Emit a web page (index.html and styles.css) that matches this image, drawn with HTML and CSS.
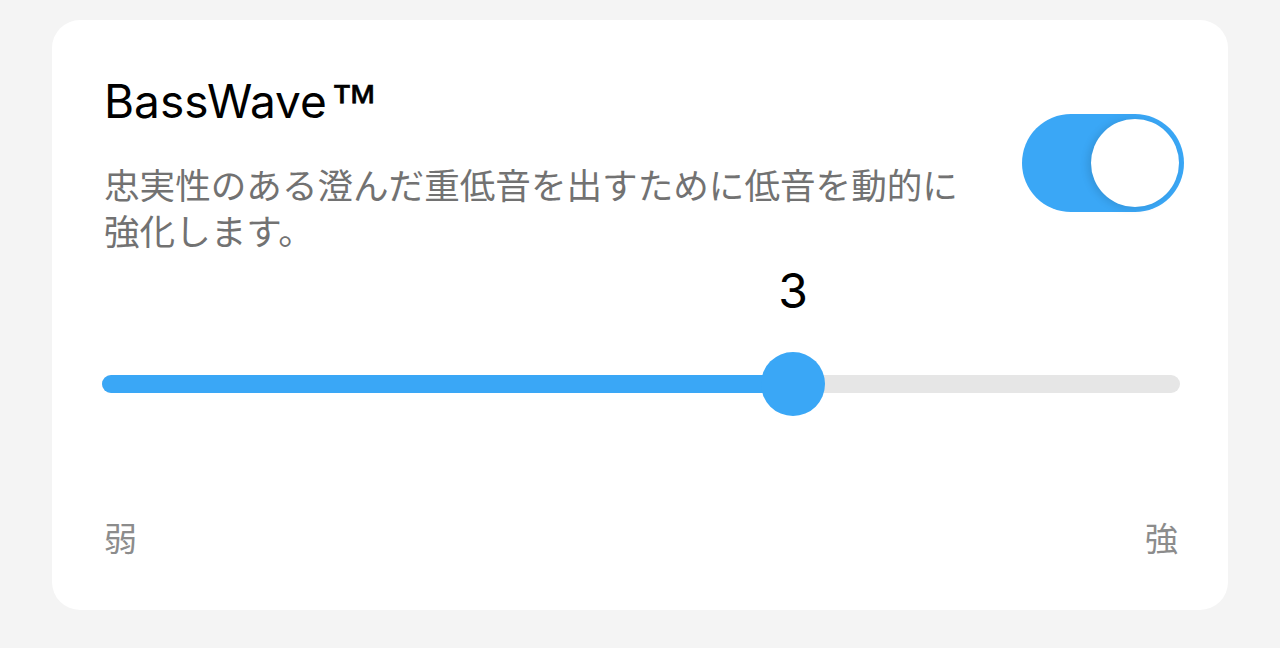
FILE: index.html
```html
<!DOCTYPE html>
<html lang="ja">
<head>
    <meta charset="UTF-8">
    <meta name="viewport" content="width=device-width, initial-scale=1.0">
    <title>BassWave</title>
    <link rel="stylesheet" href="styles.css">
</head>
<body>
    <div class="card">
        <!-- Header with toggle -->
        <div class="card-header">
            <div class="card-text">
                <h1 class="title">BassWave<span class="tm">™</span></h1>
                <p class="desc">忠実性のある澄んだ重低音を出すために低音を動的に強化します。</p>
            </div>
            <div class="toggle is-on">
                <div class="toggle-knob"></div>
            </div>
        </div>

        <!-- Level slider -->
        <div class="slider">
            <div class="slider-track">
                <div class="slider-fill" style="width: 64.1%;"></div>
                <div class="slider-value" style="left: 64.1%;">3</div>
                <div class="slider-thumb" style="left: 64.1%;"></div>
            </div>
        </div>

        <div class="slider-labels">
            <span>弱</span>
            <span>強</span>
        </div>
    </div>
</body>
</html>
```

FILE: styles.css
```css
body {
    margin: 0;
    background-color: #f4f4f4;
    font-family: Inter, "Noto Sans CJK JP", sans-serif;
    padding: 20px 52px 38px 52px;
}
.card {
    background: #fff;
    border-radius: 28px;
    padding: 53px 50px 50px 52px;
    height: 590px;
    box-sizing: border-box;
    display: flex;
    flex-direction: column;
}
.card-header {
    display: flex;
    align-items: center;
    justify-content: space-between;
}
.card-text {
    width: 880px;
}
.title {
    margin: 0;
    font-size: 46px;
    font-weight: 400;
    line-height: 56px;
    color: #000;
}
.tm {
    font-family: "Liberation Sans", sans-serif;
    font-size: 48px;
    margin-left: 3px;
    -webkit-text-stroke: 0.6px #000;
}
.desc {
    margin: 31px 0 0 0;
    font-family: "Noto Sans CJK JP", sans-serif;
    font-size: 35.6px;
    line-height: 46px;
    color: #727272;
}
.toggle {
    width: 162px;
    height: 98px;
    border-radius: 49px;
    background-color: #3aa7f6;
    box-sizing: border-box;
    padding: 5px;
    display: flex;
    justify-content: flex-end;
    margin-right: -6px;
}
.toggle-knob {
    width: 88px;
    height: 88px;
    border-radius: 50%;
    background: #fff;
    box-shadow: -3px 1px 8px rgba(0, 0, 0, 0.12);
}
.slider {
    margin: 122px -2px 0 -2px;
}
.slider-track {
    position: relative;
    height: 18px;
    border-radius: 9px;
    background-color: #e6e6e6;
}
.slider-fill {
    height: 100%;
    border-radius: 9px;
    background-color: #3aa7f6;
}
.slider-thumb {
    position: absolute;
    top: 50%;
    width: 64px;
    height: 64px;
    border-radius: 50%;
    background-color: #3aa7f6;
    transform: translate(-50%, -50%);
}
.slider-value {
    position: absolute;
    bottom: 74px;
    transform: translateX(-50%);
    font-size: 48px;
    line-height: 56px;
    color: #000;
}
.slider-labels {
    margin-top: auto;
    display: flex;
    justify-content: space-between;
    font-family: "Noto Sans CJK JP", sans-serif;
    font-size: 33px;
    line-height: 46px;
    color: #8c8c8c;
}
```
